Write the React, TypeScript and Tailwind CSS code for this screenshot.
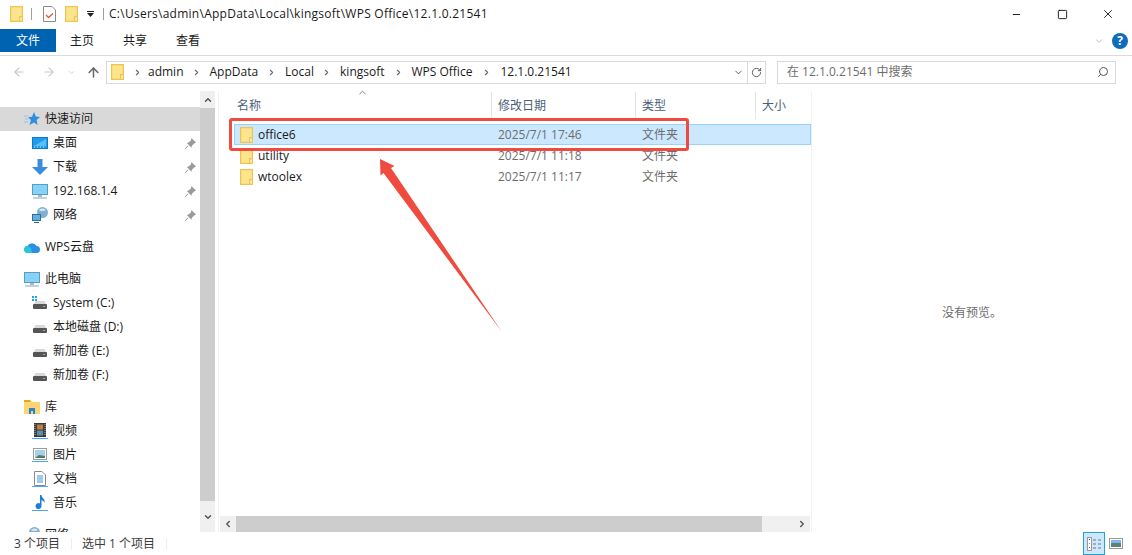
import { ChevronUp, ChevronDown, ChevronLeft, ChevronRight, ArrowLeft, ArrowRight, ArrowUp, RotateCw, Search, Minus, Square, X } from 'lucide-react'

const font = '"Open Sans", "Noto Sans CJK SC", sans-serif'

function Folder({ className = 'w-[13px] h-[16px]' }: { className?: string }) {
  return (
    <svg viewBox="0 0 13 16" className={className}>
      <path d="M0.6 0.6H12.4V15.4H0.6Z" fill="#fde48e" stroke="#eec44e" strokeWidth="1.2" />
      <path d="M9.6 10.6H12.4V15.4H9.6Z" fill="#fff1bc" stroke="#eec44e" strokeWidth="1.2" />
    </svg>
  )
}

function Star() {
  return (
    <svg viewBox="0 0 16 14" className="w-[16px] h-[14px]">
      <path d="M10 0l1.800 4.400L16 5l-3.400 3 1 5L10 10.500 5.500 13l1.400-5L4 5.200l4-.4z" fill="#2e8fe0" />
      <path d="M0 4h4M1 7h3M0 10h4" stroke="#8cc4f0" strokeWidth="1" />
    </svg>
  )
}

function Desktop() {
  return (
    <svg viewBox="0 0 16 12" className="w-[16px] h-[12px]">
      <rect x="0.500" y="0.500" width="15" height="11" fill="#1f9bec" stroke="#0d79cf" />
      <path d="M2 9L14 2V9Z" fill="#5cc0f6" />
      <path d="M2 10h12" stroke="#d6effc" strokeDasharray="1 2" />
    </svg>
  )
}

function Download() {
  return (
    <svg viewBox="0 0 16 16" className="w-[16px] h-[16px]">
      <path d="M5.500 0H10.500V8H16L8 16L0 8H5.500Z" fill="#3a8edb" />
    </svg>
  )
}

function Monitor() {
  return (
    <svg viewBox="0 0 16 15" className="w-[16px] h-[15px]">
      <rect x="0.500" y="0.500" width="15" height="10" fill="#86d2f8" stroke="#5a9cc4" />
      <path d="M6 11h4v2H6z" fill="#a9bac6" />
      <path d="M1 14h14" stroke="#a9c6da" strokeWidth="1.500" />
    </svg>
  )
}

function Network() {
  return (
    <svg viewBox="0 0 16 16" className="w-[16px] h-[16px]">
      <circle cx="10.500" cy="5.500" r="5.500" fill="#7fb0d0" />
      <path d="M7 3c2-2 5-2 7 0-2 1-5 2-7 0z" fill="#d5e6f0" />
      <rect x="0.500" y="7.500" width="8" height="6" fill="#5fb1e4" stroke="#2f6f99" />
      <path d="M2 15.500h5" stroke="#2f6f99" />
    </svg>
  )
}

function Cloud() {
  return (
    <svg viewBox="0 0 16 11" className="w-[16px] h-[11px]">
      <path d="M4 11a3.500 3.500 0 0 1-.5-7A5 5 0 0 1 12.500 4 3.500 3.500 0 0 1 12.500 11Z" fill="#2b8fe6" />
      <path d="M4 11a3.500 3.500 0 0 1-.5-7c2 0 4 2 4.500 7Z" fill="#29c7d6" />
    </svg>
  )
}

function Drive({ win = false }: { win?: boolean }) {
  return (
    <svg viewBox="0 0 16 14" className="w-[16px] h-[14px]">
      {win && <path d="M0 0h2v2H0zM3 0h2v2H3zM0 3h2v2H0zM3 3h2v2H3z" fill="#19a5ee" />}
      <path d="M2 8L3.500 5H12.500L14 8Z" fill="#d8d8d8" />
      <rect x="1" y="8" width="14" height="5" rx="1" fill="#555555" />
      <rect x="11" y="10" width="2" height="1" fill="#6fd06f" />
    </svg>
  )
}

function Library() {
  return (
    <svg viewBox="0 0 16 14" className="w-[16px] h-[14px]">
      <path d="M0 0H6L8 2H16V14H0Z" fill="#fbd56f" />
      <path d="M0 0H6L7 2H0Z" fill="#e0a522" />
      <path d="M5 8H11V14H9V11H7V14H5Z" fill="#2a80d2" />
    </svg>
  )
}

function Video() {
  return (
    <svg viewBox="0 0 16 16" className="w-[16px] h-[16px]">
      <rect x="2" y="0" width="12" height="14" fill="#3a3a3a" />
      <rect x="5" y="1.500" width="6" height="5" fill="#c2813a" />
      <rect x="5" y="7.500" width="6" height="5" fill="#5a8fb0" />
      <path d="M3 1v12M13 1v12" stroke="#bbb" strokeDasharray="1 1" />
      <path d="M0 15.500h16" stroke="#4ba7e8" />
    </svg>
  )
}

function Picture() {
  return (
    <svg viewBox="0 0 16 14" className="w-[16px] h-[14px]">
      <rect x="1.500" y="0.500" width="13" height="11" fill="#fff" stroke="#9a9a9a" />
      <rect x="3" y="2" width="10" height="8" fill="#a6cfe8" />
      <path d="M3 10l4-3 6 1v2z" fill="#4f7a66" />
      <path d="M0 13.500h16" stroke="#4ba7e8" />
    </svg>
  )
}

function Doc() {
  return (
    <svg viewBox="0 0 16 16" className="w-[16px] h-[16px]">
      <path d="M2.500 .5H10L13.500 4V14.500H2.500Z" fill="#fff" stroke="#8a8a8a" />
      <path d="M5 5h6M5 7h6M5 9h6M5 11h6" stroke="#3a97dc" />
      <path d="M0 15.500h16" stroke="#4ba7e8" />
    </svg>
  )
}

function Music() {
  return (
    <svg viewBox="0 0 16 16" className="w-[16px] h-[16px]">
      <path d="M8 0h1.500c0 3 4 3.500 3 8-.5-2-2-2.500-3-3V11a3 3 0 1 1-1.500-2.500Z" fill="#1c7ed6" />
      <path d="M0 15.500h16" stroke="#4ba7e8" />
    </svg>
  )
}

function Pin() {
  return (
    <svg viewBox="0 0 12 12" className="w-[11px] h-[11px]">
      <path d="M7 0l5 5-2 1-2.500 2.500-.5 2-5-5 2-.5L6.500 2.500Z" fill="#9a9a9a" />
      <path d="M3.500 8.500L0 12" stroke="#9a9a9a" />
    </svg>
  )
}

function SideRow({ icon, label, indent = false, pin = false, active = false }: { icon: React.ReactNode; label: string; indent?: boolean; pin?: boolean; active?: boolean }) {
  return (
    <div className={`flex items-center h-6 ${active ? 'bg-[#d9d9d9]' : ''} ${indent ? 'pl-[32px]' : 'pl-[24px]'}`}>
      <span className="w-[16px] flex justify-center shrink-0">{icon}</span>
      <span className="ml-[5px] text-[12px] text-[#1a1a1a] whitespace-nowrap">{label}</span>
      {pin && <span className="ml-auto mr-[4px] flex"><Pin /></span>}
    </div>
  )
}

function FileRow({ name, date, selected = false }: { name: string; date: string; selected?: boolean }) {
  return (
    <div className={`flex items-center h-[21px] pl-[5px] border ${selected ? 'bg-[#cce8ff] border-[#99d1ff]' : 'border-transparent'}`}>
      <Folder className="w-[13px] h-[16px] shrink-0" />
      <span className="ml-[5px] w-[240px] text-[12px] text-[#1a1a1a]">{name}</span>
      <span className="w-[144px] text-[12px] text-[#6d6d6d]">{date}</span>
      <span className="text-[12px] text-[#6d6d6d]">文件夹</span>
    </div>
  )
}

export default function App() {
  return (
    <div className="relative w-[1132px] h-[555px] bg-white overflow-hidden flex flex-col" style={{ fontFamily: font }}>
      {/* title bar */}
      <div className="h-[29px] flex items-center shrink-0 pl-[10px] pb-[1px]">
        <Folder className="w-[13px] h-[16px]" />
        <span className="ml-[8px] w-px h-[12px] bg-[#a0a0a0]" />
        <svg viewBox="0 0 13 16" className="ml-[11px] w-[13px] h-[16px]">
          <path d="M.5.5H9L12.500 4V15.500H.5Z" fill="#fff" stroke="#8a8a8a" />
          <path d="M3 9l2.500 2.500L10 7.500" fill="none" stroke="#e8552d" strokeWidth="1.300" />
        </svg>
        <span className="ml-[9px] flex"><Folder className="w-[13px] h-[16px]" /></span>
        <svg viewBox="0 0 8 6" className="ml-[9px] w-[8px] h-[6px]">
          <path d="M0 .5h7" stroke="#222" />
          <path d="M0 2h7L3.500 6Z" fill="#222" />
        </svg>
        <span className="ml-[8px] w-px h-[12px] bg-[#a0a0a0]" />
        <span className="ml-[5px] text-[12px] tracking-[0.26px] text-[#1a1a1a] whitespace-nowrap">C:\Users\admin\AppData\Local\kingsoft\WPS Office\12.1.0.21541</span>
        <div className="ml-auto mr-px flex items-center">
          <span className="w-[46px] flex justify-center"><Minus size={11} strokeWidth={2} color="#111" /></span>
          <span className="w-[46px] flex justify-center"><Square size={11} strokeWidth={2} color="#111" /></span>
          <span className="w-[46px] flex justify-center"><X size={14} strokeWidth={1.500} color="#111" /></span>
        </div>
      </div>

      {/* ribbon tabs */}
      <div className="h-[27px] shrink-0 flex items-start border-b border-[#dadada] pr-[4px]">
        <span className="w-[56px] h-[23px] bg-[#0063b1] text-white text-[12px] flex items-center justify-center pt-px">文件</span>
        <div className="h-[23px] flex items-center text-[12px] text-[#1a1a1a] pt-px">
          <span className="ml-[14px]">主页</span>
          <span className="ml-[29px]">共享</span>
          <span className="ml-[29px]">查看</span>
        </div>
        <div className="ml-auto h-[23px] flex items-center">
          <ChevronDown size={10} color="#9a9a9a" strokeWidth={1.500} />
          <span className="ml-[8px] w-[16px] h-[16px] rounded-full bg-[#0f6cbd] text-white text-[12px] font-bold flex items-center justify-center">?</span>
        </div>
      </div>

      {/* address row */}
      <div className="h-[35px] shrink-0 flex items-center pl-[12px] pb-[3px]">
        <ArrowLeft size={14} color="#c8c8c8" />
        <ArrowRight size={14} color="#c8c8c8" className="ml-[16px]" />
        <ChevronDown size={9} color="#c8c8c8" className="ml-[11px]" />
        <ArrowUp size={15} color="#6a6a6a" strokeWidth={2.500} className="ml-[10px]" />
        <div className="ml-[5px] w-[660px] h-[23px] border border-[#d9d9d9] flex items-center">
          <span className="ml-[4px] flex"><Folder className="w-[13px] h-[16px]" /></span>
          <div className="flex items-center text-[12px] text-[#1a1a1a] whitespace-nowrap">
            <ChevronRight size={9} color="#6a6a6a" strokeWidth={3} className="ml-[9px]" />
            <span className="ml-[6px]">admin</span>
            <ChevronRight size={9} color="#6a6a6a" strokeWidth={3} className="ml-[8px]" />
            <span className="ml-[9px]">AppData</span>
            <ChevronRight size={9} color="#6a6a6a" strokeWidth={3} className="ml-[9px]" />
            <span className="ml-[9px]">Local</span>
            <ChevronRight size={9} color="#6a6a6a" strokeWidth={3} className="ml-[8px]" />
            <span className="ml-[9px]">kingsoft</span>
            <ChevronRight size={9} color="#6a6a6a" strokeWidth={3} className="ml-[9px]" />
            <span className="ml-[9px]">WPS Office</span>
            <ChevronRight size={9} color="#6a6a6a" strokeWidth={3} className="ml-[10px]" />
            <span className="ml-[9px]">12.1.0.21541</span>
          </div>
          <div className="ml-auto flex items-center h-full">
            <ChevronDown size={11} color="#555" strokeWidth={2} className="mr-[3px]" />
            <span className="w-[18px] h-full border-l border-[#d9d9d9] flex items-center justify-center">
              <RotateCw size={11} color="#555" />
            </span>
          </div>
        </div>
        <div className="ml-[11px] w-[339px] h-[23px] border border-[#d9d9d9] flex items-center pl-[9px] pr-[6px]">
          <span className="text-[12px] text-[#6d6d6d] whitespace-nowrap">在 12.1.0.21541 中搜索</span>
          <Search size={12} color="#555" strokeWidth={2} className="ml-auto -scale-x-100" />
        </div>
      </div>

      {/* main */}
      <div className="flex-1 flex min-h-0">
        {/* nav pane */}
        <div className="w-[216px] shrink-0 flex h-[443px] overflow-hidden">
          <div className="w-[200px] shrink-0 pt-[16px] overflow-hidden">
            <SideRow active icon={<Star />} label="快速访问" />
            <SideRow indent pin icon={<Desktop />} label="桌面" />
            <SideRow indent pin icon={<Download />} label="下载" />
            <SideRow indent pin icon={<Monitor />} label="192.168.1.4" />
            <SideRow indent pin icon={<Network />} label="网络" />
            <div className="h-2" />
            <SideRow icon={<Cloud />} label="WPS云盘" />
            <div className="h-2" />
            <SideRow icon={<Monitor />} label="此电脑" />
            <SideRow indent icon={<Drive win />} label="System (C:)" />
            <SideRow indent icon={<Drive />} label="本地磁盘 (D:)" />
            <SideRow indent icon={<Drive />} label="新加卷 (E:)" />
            <SideRow indent icon={<Drive />} label="新加卷 (F:)" />
            <div className="h-2" />
            <SideRow icon={<Library />} label="库" />
            <SideRow indent icon={<Video />} label="视频" />
            <SideRow indent icon={<Picture />} label="图片" />
            <SideRow indent icon={<Doc />} label="文档" />
            <SideRow indent icon={<Music />} label="音乐" />
            <div className="h-2" />
            <SideRow icon={<Network />} label="网络" />
          </div>
          <div className="w-[15px] shrink-0 h-[441px] bg-[#f0f0f0] flex flex-col">
            <div className="h-[17px] flex items-center justify-center"><ChevronUp size={10} color="#555" strokeWidth={3.500} /></div>
            <div className="h-[393px] bg-[#cdcdcd]" />
            <div className="flex-1 flex items-center justify-center"><ChevronDown size={10} color="#555" strokeWidth={3.500} /></div>
          </div>
        </div>

        {/* file list */}
        <div className="w-[594px] shrink-0 h-[441px] ml-[2px] border-x border-[#f2f2f2] flex flex-col">
          <div className="h-[27px] shrink-0 relative flex text-[12px] text-[#4c607a] mt-[1px]">
            <div className="w-[273px] pl-[18px] border-r border-[#e5e5e5] flex items-center">名称</div>
            <div className="w-[144px] pl-[6px] border-r border-[#e5e5e5] flex items-center">修改日期</div>
            <div className="w-[120px] pl-[6px] border-r border-[#e5e5e5] flex items-center">类型</div>
            <div className="pl-[6px] flex items-center">大小</div>
            <ChevronUp size={11} color="#777" className="absolute left-[138px] -top-[5px]" />
          </div>
          <div className="flex-1 pt-[5px] pl-[15px]">
            <FileRow selected name="office6" date="2025/7/1 17:46" />
            <FileRow name="utility" date="2025/7/1 11:18" />
            <FileRow name="wtoolex" date="2025/7/1 11:17" />
          </div>
          <div className="h-[16px] shrink-0 mx-px bg-[#f0f0f0] flex items-center">
            <span className="w-[16px] flex justify-center"><ChevronLeft size={10} color="#555" strokeWidth={3.500} /></span>
            <div className="w-[526px] h-full bg-[#cdcdcd]" />
            <span className="ml-auto w-[16px] flex justify-center"><ChevronRight size={10} color="#555" strokeWidth={3.500} /></span>
          </div>
        </div>

        {/* preview */}
        <div className="flex-1 h-[441px] flex items-center justify-center pt-[2px]">
          <span className="text-[12px] text-[#6d6d6d]">没有预览。</span>
        </div>
      </div>

      {/* status bar */}
      <div className="absolute left-0 bottom-0 w-full h-[23px] flex items-center bg-white pl-[14px] text-[12px] text-[#3c3c3c]">
        <span>3 个项目</span>
        <span className="ml-[11px] w-px h-[12px] bg-[#eeeeee]" />
        <span className="ml-[10px]">选中 1 个项目</span>
        <span className="ml-[11px] w-px h-[12px] bg-[#eeeeee]" />
        <div className="ml-auto mr-[9px] flex items-center gap-[4px]">
          <span className="w-[22px] h-[23px] bg-[#cce8ff] border-[1.5px] border-[#26a0da] flex items-center justify-center">
            <svg viewBox="0 0 16 16" className="w-[16px] h-[16px]">
              <rect x="1.500" y="1.500" width="4" height="13" fill="#fff" stroke="#9a9a9a" />
              <path d="M3 3.500h1" stroke="#555" />
              <path d="M3 7.500h1" stroke="#4a9bd8" />
              <path d="M3 11.500h1" stroke="#c0392b" />
              <path d="M7 4h3M12 4h3M7 8h3M12 8h3M7 12h3M12 12h3" stroke="#777" />
            </svg>
          </span>
          <svg viewBox="0 0 14 11" className="w-[14px] h-[11px]">
            <rect x=".5" y=".5" width="13" height="10" fill="#fff" stroke="#9a9a9a" />
            <rect x="2" y="2" width="10" height="3" fill="#79b8f0" />
            <rect x="2" y="5" width="10" height="4" fill="#5d8270" />
          </svg>
        </div>
      </div>

      {/* annotation */}
      <div className="absolute left-[229px] top-[118px] w-[460px] h-[33px] border-[3px] border-[#ef4b3f] rounded-[3px]" />
      <svg viewBox="0 0 1132 555" className="absolute inset-0 w-[1132px] h-[555px] pointer-events-none">
        <path d="M380 159L394.500 166L391 168L502 332L383.500 173L380.500 175.500Z" fill="#ef4b3f" />
      </svg>
    </div>
  )
}
